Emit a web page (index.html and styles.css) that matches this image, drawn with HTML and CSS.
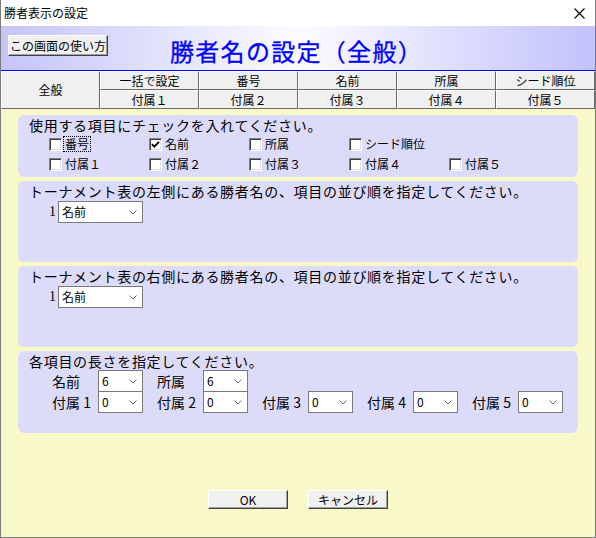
FILE: index.html
```html
<!DOCTYPE html>
<html lang="ja">
<head>
<meta charset="utf-8">
<title>勝者表示の設定</title>
<link rel="stylesheet" href="styles.css">
</head>
<body>
<div class="window">
  <div class="titlebar">
    <span class="wtitle">勝者表示の設定</span>
    <svg class="close" width="11" height="11" viewBox="0 0 11 11"><path d="M0.5 0.5L10.5 10.5M10.5 0.5L0.5 10.5" stroke="#000" stroke-width="1.1" fill="none"/></svg>
  </div>
  <div class="header">
    <button class="btn help">この画面の使い方</button>
    <h1 class="title">勝者名の設定（全般）</h1>
  </div>
  <div class="tabs">
    <div class="tab all">全般</div>
    <div class="tab">一括で設定</div>
    <div class="tab">番号</div>
    <div class="tab">名前</div>
    <div class="tab">所属</div>
    <div class="tab">シード順位</div>
    <div class="tab">付属１</div>
    <div class="tab">付属２</div>
    <div class="tab">付属３</div>
    <div class="tab">付属４</div>
    <div class="tab">付属５</div>
  </div>
  <div class="content">
    <section class="panel p-use">
      <div class="heading">使用する項目にチェックを入れてください。</div>
      <div class="checks">
        <label class="chk"><span class="box"></span><span class="lbl focus">番号</span></label>
        <label class="chk"><span class="box"><svg width="9" height="9" viewBox="0 0 9 9"><path d="M1 4.2L3.3 6.6L8 1.8" stroke="#000" stroke-width="1.8" fill="none"/></svg></span><span class="lbl">名前</span></label>
        <label class="chk"><span class="box"></span><span class="lbl">所属</span></label>
        <label class="chk"><span class="box"></span><span class="lbl">シード順位</span></label>
        <span class="chk"></span>
        <label class="chk"><span class="box"></span><span class="lbl">付属１</span></label>
        <label class="chk"><span class="box"></span><span class="lbl">付属２</span></label>
        <label class="chk"><span class="box"></span><span class="lbl">付属３</span></label>
        <label class="chk"><span class="box"></span><span class="lbl">付属４</span></label>
        <label class="chk"><span class="box"></span><span class="lbl">付属５</span></label>
      </div>
    </section>
    <section class="panel p-order">
      <div class="heading">トーナメント表の左側にある勝者名の、項目の並び順を指定してください。</div>
      <div class="order-row">
        <span class="num">1</span>
        <span class="sel wide"><span class="val">名前</span><svg class="chev" width="8" height="5" viewBox="0 0 8 5"><path d="M0.5 0.5L4 4L7.5 0.5" stroke="#6a6a6a" fill="none"/></svg></span>
      </div>
    </section>
    <section class="panel p-order">
      <div class="heading">トーナメント表の右側にある勝者名の、項目の並び順を指定してください。</div>
      <div class="order-row">
        <span class="num">1</span>
        <span class="sel wide"><span class="val">名前</span><svg class="chev" width="8" height="5" viewBox="0 0 8 5"><path d="M0.5 0.5L4 4L7.5 0.5" stroke="#6a6a6a" fill="none"/></svg></span>
      </div>
    </section>
    <section class="panel p-len">
      <div class="heading">各項目の長さを指定してください。</div>
      <div class="len-row">
        <div class="grp"><span class="glbl">名前</span><span class="sel"><span class="val">6</span><svg class="chev" width="8" height="5" viewBox="0 0 8 5"><path d="M0.5 0.5L4 4L7.5 0.5" stroke="#6a6a6a" fill="none"/></svg></span></div>
        <div class="grp"><span class="glbl">所属</span><span class="sel"><span class="val">6</span><svg class="chev" width="8" height="5" viewBox="0 0 8 5"><path d="M0.5 0.5L4 4L7.5 0.5" stroke="#6a6a6a" fill="none"/></svg></span></div>
      </div>
      <div class="len-row second">
        <div class="grp"><span class="glbl">付属 1</span><span class="sel"><span class="val">0</span><svg class="chev" width="8" height="5" viewBox="0 0 8 5"><path d="M0.5 0.5L4 4L7.5 0.5" stroke="#6a6a6a" fill="none"/></svg></span></div>
        <div class="grp"><span class="glbl">付属 2</span><span class="sel"><span class="val">0</span><svg class="chev" width="8" height="5" viewBox="0 0 8 5"><path d="M0.5 0.5L4 4L7.5 0.5" stroke="#6a6a6a" fill="none"/></svg></span></div>
        <div class="grp"><span class="glbl">付属 3</span><span class="sel"><span class="val">0</span><svg class="chev" width="8" height="5" viewBox="0 0 8 5"><path d="M0.5 0.5L4 4L7.5 0.5" stroke="#6a6a6a" fill="none"/></svg></span></div>
        <div class="grp"><span class="glbl">付属 4</span><span class="sel"><span class="val">0</span><svg class="chev" width="8" height="5" viewBox="0 0 8 5"><path d="M0.5 0.5L4 4L7.5 0.5" stroke="#6a6a6a" fill="none"/></svg></span></div>
        <div class="grp"><span class="glbl">付属 5</span><span class="sel"><span class="val">0</span><svg class="chev" width="8" height="5" viewBox="0 0 8 5"><path d="M0.5 0.5L4 4L7.5 0.5" stroke="#6a6a6a" fill="none"/></svg></span></div>
      </div>
    </section>
    <div class="actions">
      <button class="btn act">OK</button>
      <button class="btn act">キャンセル</button>
    </div>
  </div>
</div>
</body>
</html>
```

FILE: styles.css
```css
* { box-sizing: border-box; }
body {
  margin: 0;
  background: #ffffff;
  font-family: "Noto Sans CJK JP", "Noto Sans", sans-serif;
  color: #000;
}
.window {
  width: 596px;
  height: 538px;
  border: 1px solid #7a7a7a;
  border-top: none;
  background: #f9f8c8;
  display: flex;
  flex-direction: column;
}
.titlebar {
  height: 26px;
  flex: none;
  background: #fff;
  display: flex;
  align-items: center;
  justify-content: space-between;
  padding: 0 10px 0 3px;
  font-size: 12px;
  line-height: 14px;
}
.close { display: block; }
.header {
  height: 45px;
  flex: none;
  border-bottom: 1px solid #0000ff;
  background: linear-gradient(90deg, #c4c4fa 0%, #fcfcff 50%, #c2c2fc 100%);
  display: flex;
  align-items: flex-start;
  padding-left: 7px;
}
.btn {
  font-family: "Noto Sans CJK JP", "Noto Sans", sans-serif;
  font-size: 12px;
  line-height: 14px;
  color: #000;
  background: #f0f0f0;
  border: 1px solid;
  border-color: #ffffff #404040 #404040 #ffffff;
  box-shadow: inset -1px -1px 0 #a0a0a0;
  padding: 0;
  margin: 0;
}
.help {
  width: 100px;
  height: 21px;
  margin-top: 9px;
}
.title {
  margin: 13px 0 0 62px;
  font-size: 24px;
  line-height: 24px;
  font-weight: normal;
  color: #0000ff;
  letter-spacing: 1.3px;
  -webkit-text-stroke: 0.3px #0000ff;
}
.tabs {
  flex: none;
  display: grid;
  grid-template-columns: repeat(6, 99px);
  grid-template-rows: 19px 19px;
  font-size: 12px;
  line-height: 14px;
}
.tab {
  background: #f0f0f0;
  border: 1px solid;
  border-color: #ffffff #696969 #696969 #ffffff;
  display: flex;
  align-items: center;
  justify-content: center;
}
.tab.all { grid-row: span 2; }
.content {
  flex: 1;
  display: flex;
  flex-direction: column;
  padding: 6px 0 0 17px;
}
.panel {
  width: 560px;
  background: #dcdcfa;
  border-radius: 6px;
  padding: 2px 0 0 0;
}
.panel + .panel { margin-top: 4px; }
.heading {
  font-size: 14px;
  line-height: 16px;
  letter-spacing: 0.7px;
  padding-left: 11px;
  white-space: nowrap;
}
.p-use { height: 62px; }
.checks {
  display: grid;
  grid-template-columns: repeat(5, 100px);
  grid-auto-rows: 20px;
  padding-left: 31px;
  margin-top: 1px;
}
.chk {
  display: flex;
  align-items: center;
  font-size: 12px;
  line-height: 14px;
}
.box {
  width: 13px;
  height: 13px;
  flex: none;
  background: #fff;
  border: 1px solid;
  border-color: #808080 #ffffff #ffffff #808080;
  box-shadow: inset 1px 1px 0 #404040, inset -1px -1px 0 #e0e0e0;
  display: flex;
  align-items: center;
  justify-content: center;
}
.box svg { display: block; }
.lbl { margin-left: 1px; padding: 0 1px; border: 1px solid transparent; }
.lbl.focus { border: 1px dotted #000; }
.p-order { height: 81px; }
.order-row {
  display: flex;
  align-items: center;
  padding-left: 31px;
  margin-top: 2px;
}
.num {
  width: 9px;
  font-family: "Liberation Serif", serif;
  font-size: 14px;
  line-height: 16px;
  text-align: left;
}
.sel {
  position: relative;
  display: flex;
  align-items: center;
  width: 45px;
  height: 22px;
  background: #fff;
  border: 1px solid #7a7a7a;
  padding-left: 3px;
  font-size: 12px;
  line-height: 14px;
}
.sel.wide { width: 85px; }
.val { font-family: "Noto Sans CJK JP", "Liberation Sans", sans-serif; }
.chev {
  position: absolute;
  right: 5px;
  top: 8px;
  display: block;
}
.p-len { height: 82px; }
.len-row {
  display: grid;
  grid-template-columns: repeat(5, 105px);
  padding-left: 34px;
  margin-top: 1px;
}
.len-row.second { margin-top: -1px; }
.grp {
  display: flex;
  align-items: center;
}
.glbl {
  width: 46px;
  font-size: 14px;
  line-height: 16px;
  white-space: nowrap;
}
.actions {
  display: flex;
  justify-content: center;
  gap: 20px;
  margin-top: 57px;
  padding-right: 17px;
}
.act {
  width: 80px;
  height: 19px;
}
```
